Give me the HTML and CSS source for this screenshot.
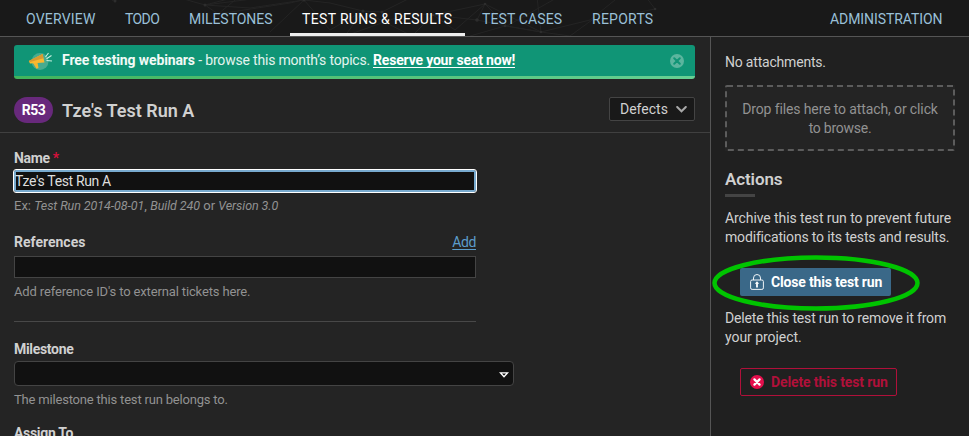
FILE: index.html
```
<!DOCTYPE html>
<html lang="en">
<head>
<meta charset="utf-8">
<title>Tze's Test Run A</title>
<link rel="stylesheet" href="styles.css">
</head>
<body>
<header class="topbar">
  <svg class="net" width="969" height="36" viewBox="0 0 969 36" fill="none" stroke="#242424">
    <path d="M110-5L113 1M180-2L205 5L218 14L240-4L205 5L260-2M218 14L290 3L320-4M205 5L250 8L304 0L270 32M304 0L330 3L363 11L382 12L412-3M304 0L330 30L363 11L345 36L410 13L433 15L412 36L363 11M433 15L485 4L477 20L433 15L455 30L485 4L507 26L541 32L505 26L470 36M485 4L541 32L537-3M541 32L570 36M541 32L590 20L620-4M570 36L592 20M477 20L507 26L560-4M646-3L655 9L640 12"/>
    <g fill="#2d2d2d" stroke="none"><circle cx="115" cy="1" r="1.5"/><circle cx="205" cy="5" r="1.5"/><circle cx="304" cy="0" r="1.5"/><circle cx="363" cy="11" r="1.5"/><circle cx="382" cy="12" r="1.5"/><circle cx="433" cy="15" r="1.3"/><circle cx="477" cy="20" r="1.8"/><circle cx="485" cy="4" r="1.3"/><circle cx="505" cy="26" r="1.3"/><circle cx="541" cy="32" r="1.3"/><circle cx="655" cy="9" r="1.3"/></g>
  </svg>
  <nav class="nav">
    <a class="tab overview">OVERVIEW</a>
    <a class="tab todo">TODO</a>
    <a class="tab milestones">MILESTONES</a>
    <a class="tab runs active">TEST RUNS &amp; RESULTS</a>
    <a class="tab cases">TEST CASES</a>
    <a class="tab reports">REPORTS</a>
    <a class="tab admin">ADMINISTRATION</a>
  </nav>
</header>
<div class="layout">
  <main class="main">
    <div class="banner">
      <svg class="horn" width="26" height="20" viewBox="0 0 26 20">
        <circle cx="12" cy="10.500" r="8.500" fill="#47ab90"/>
        <path d="M5 12l4.500-.5L10.500 17l-2 .8z" fill="#f5b72e"/>
        <path d="M.8 10L14.500 3l2 8.500L2 12.500z" fill="#fbb92f"/>
        <path d="M.8 10L14.500 3l1 4.200L2 11z" fill="#d79a32"/>
        <path d="M17.500 6L20.500 2M18.500 7.800L23.500 4.500M18.500 9.500L24 10" stroke="#c8f0e0" stroke-width="1.100" fill="none"/>
      </svg>
      <span class="btext"><b class="b1">Free testing webinars</b><span class="b2">&nbsp;- browse this month’s topics.</span><a class="b3">Reserve your seat now!</a></span>
      <svg class="dismiss" width="14" height="14" viewBox="0 0 14 14"><circle cx="7" cy="7" r="7" fill="#5bb59e"/><path d="M4.200 4.200l5.600 5.600M9.800 4.200L4.200 9.800" stroke="#109576" stroke-width="2" stroke-linecap="round"/></svg>
    </div>
    <div class="titlebar">
      <span class="badge">R53</span>
      <h1 class="title">Tze's Test Run A</h1>
      <button class="defects"><span>Defects</span><svg width="11" height="7" viewBox="0 0 11 7"><path d="M1.200 1l4.300 4.300L9.800 1" fill="none" stroke="#a8a8a8" stroke-width="2" stroke-linecap="round"/></svg></button>
    </div>
    <form class="form">
      <div class="label"><span class="l-name">Name</span><span class="req">*</span></div>
      <div class="field focused">Tze's Test Run A</div>
      <p class="hint ex">Ex: <i>Test Run 2014-08-01</i>, <i>Build 240</i> or <i>Version 3.0</i></p>
      <div class="label refs"><span class="l-refs">References</span><a class="add">Add</a></div>
      <div class="field"></div>
      <p class="hint h-refs">Add reference ID's to external tickets here.</p>
      <hr class="rule">
      <div class="label"><span class="l-mile">Milestone</span></div>
      <div class="select"><svg width="10" height="6" viewBox="0 0 10 6"><path d="M1.400.8h7.200L5 4.700z" fill="#111" stroke="#fff" stroke-width="1.300"/></svg></div>
      <p class="hint h-mile">The milestone this test run belongs to.</p>
      <div class="label assign"><span class="l-mile">Assign To</span></div>
    </form>
  </main>
  <aside class="side">
    <p class="none">No attachments.</p>
    <div class="drop">
      <svg class="dash" width="230" height="66" viewBox="0 0 230 66"><rect x="1" y="1" width="228" height="64" rx="1"/></svg>
      Drop files here to attach, or click<br><span class="browse">to browse.</span>
    </div>
    <h2 class="actions">Actions</h2>
    <div class="bar"></div>
    <p class="text archive">Archive this test run to prevent future<br><span class="mods">modifications to its tests and results.</span></p>
    <div class="closebox">
      <button class="btn close"><svg width="14" height="16" viewBox="0 0 14 16"><g fill="none" stroke="#eef3f7"><rect x=".6" y="6" width="12.800" height="9.400" rx="1.500"/><path d="M3.500 6V4a3.500 3.500 0 0 1 7 0v2"/></g><path d="M7 7.200l2.200 2.600H7.900v3.700H6.100V9.800H4.800z" fill="#fff"/></svg><span>Close this test run</span></button>
      <svg class="ring" width="210" height="60" viewBox="0 0 210 60"><ellipse cx="105" cy="30" rx="101.500" ry="25.500"/></svg>
    </div>
    <p class="text remove">Delete this test run to remove it from<br><span class="proj">your project.</span></p>
    <button class="btn delete"><svg width="14" height="14" viewBox="0 0 14 14"><circle cx="7" cy="7" r="7" fill="#e40f4c"/><path d="M4.400 4.400l5.200 5.200M9.600 4.400L4.400 9.600" stroke="#fff" stroke-width="2.200" stroke-linecap="round"/></svg><span>Delete this test run</span></button>
  </aside>
</div>
</body>
</html>
```
FILE: styles.css
```
* { box-sizing: border-box; }
body {
  margin: 0; width: 969px; height: 436px; overflow: hidden;
  background: #242424; color: #d0d0d0;
  font: 14px/19px Roboto, "Liberation Sans", sans-serif;
}
p, h1, h2 { margin: 0; }
button { font: inherit; color: inherit; margin: 0; }
svg { display: block; flex: none; }

.topbar { position: relative; height: 37px; background: #191919; border-bottom: 1px solid #555; }
.net { position: absolute; left: 0; top: 0; }
.nav { position: relative; display: flex; height: 36px; padding-left: 14px; }
.tab { padding-left: 12px; line-height: 39px; height: 36px; color: #9ac0d8; white-space: nowrap; }
.overview { width: 99px; letter-spacing: .2px; }
.todo { width: 64px; letter-spacing: -.6px; }
.milestones { width: 113px; letter-spacing: -.04px; }
.runs { width: 175px; letter-spacing: .34px; }
.cases { width: 110px; padding-left: 17px; letter-spacing: .12px; }
.reports { width: 84px; padding-left: 17px; letter-spacing: .25px; }
.admin { margin-left: auto; width: 151px; letter-spacing: -.07px; }
.active { color: #fff; border-bottom: 3px solid #eee; }

.layout { display: flex; height: 399px; }
.main { width: 710px; }
.banner {
  display: flex; align-items: center; height: 34px; margin: 8px 15px 0 14px; padding: 0 11px 3px 14px;
  border-radius: 3px; color: #e4f4ef;
  background: linear-gradient(90deg, #40b45c, #66d094) bottom / 100% 3px no-repeat, #109576;
}
.btext { display: flex; margin-left: 8px; white-space: nowrap; }
.b1 { width: 133px; letter-spacing: -.12px; color: #f2faf7; }
.b2 { width: 178px; letter-spacing: -.19px; }
.b3 { font-weight: 700; color: #fff; letter-spacing: -.18px; height: 17px; line-height: 19px; border-bottom: 1px solid #fff; }
.dismiss { margin-left: auto; }

.titlebar { display: flex; align-items: center; height: 54px; padding: 8px 15px 0 14px; border-bottom: 1px solid #404040; }
.badge { width: 39px; height: 26px; border-radius: 13px; background: #68297c; color: #fff; font-weight: 700; line-height: 26px; text-align: center; letter-spacing: -.5px; }
.title { margin: 2px 0 0 9px; font-size: 18px; font-weight: 600; line-height: 24px; }
.defects { display: flex; align-items: center; gap: 8px; margin: -1px 0 0 auto; width: 86px; height: 24px; padding: 0 0 0 10px; background: #191919; border: 1px solid #444; border-radius: 2px; }

.form { padding: 15px 0 0 14px; }
.label { display: flex; width: 462px; height: 22px; line-height: 21px; font-weight: 700; }
.l-name { letter-spacing: -.35px; }
.l-mile { letter-spacing: -.32px; }
.req { margin-left: 3px; color: #d8103c; }
.field { width: 462px; height: 22px; background: #111; border: 1px solid #444; }
.focused {
  width: 464px; height: 24px; margin: -1px 0 0 -1px; padding-left: 1px; line-height: 23px;
  color: #dedede; border: 1px solid #fff; border-radius: 3px; box-shadow: inset 0 0 0 2px #78aace; letter-spacing: -.35px;
}
.hint { height: 19px; margin-top: 3px; font-size: 13px; line-height: 19px; color: #929292; white-space: nowrap; }
.ex i { font-size: 12.500px; letter-spacing: -.07px; }
.refs { justify-content: space-between; margin-top: 16px; height: 25px; line-height: 23px; }
.add { font-weight: 400; color: #5c9dcb; letter-spacing: -.4px; text-decoration: underline; text-underline-offset: 2px; }
.h-refs { letter-spacing: -.14px; margin-top: 4px; }
.rule { width: 462px; height: 1px; margin: 20px 0 17px; border: 0; background: #484848; }
.select { display: flex; justify-content: flex-end; align-items: center; width: 500px; height: 25px; padding: 2px 4px 0 0; background: #111; border: 1px solid #444; border-radius: 4px; }
.h-mile { letter-spacing: -.19px; margin-top: 4px; }
.assign { margin-top: 14px; }

.side { width: 259px; padding: 16px 14px 0 14px; background: #202020; border-left: 1px solid #555; }
.none { letter-spacing: -.2px; }
.drop { position: relative; height: 66px; margin-top: 13px; padding-top: 15px; text-align: center; background: #242424; color: #929292; letter-spacing: -.12px; white-space: nowrap; }
.dash { position: absolute; left: 0; top: 0; fill: none; stroke: #5c5c5c; stroke-width: 2; stroke-dasharray: 6 4; }
.browse { letter-spacing: -.25px; }
.actions { margin-top: 17px; font-size: 17px; line-height: 22px; font-weight: 600; letter-spacing: -.1px; }
.bar { width: 30px; height: 3px; margin-top: 4px; background: #444; }
.text { white-space: nowrap; }
.archive { margin-top: 12px; letter-spacing: -.09px; }
.mods { letter-spacing: -.17px; }
.closebox { position: relative; margin-top: 21px; }
.btn { display: flex; align-items: center; gap: 7px; height: 28px; margin-left: 15px; padding: 0 0 0 10px; border: 0; border-radius: 2px; font-weight: 700; white-space: nowrap; }
.close { width: 151px; background: #3a6888; color: #fff; letter-spacing: -.18px; }
.ring { position: absolute; left: -14px; top: -15px; fill: none; stroke: #00c400; stroke-width: 4.500; }
.remove { margin-top: 13px; letter-spacing: -.16px; }
.proj { letter-spacing: -.05px; }
.delete { width: 157px; margin-top: 21px; padding-left: 9px; background: transparent; border: 1px solid #b0103a; color: #b0103a; letter-spacing: -.12px; }
```
